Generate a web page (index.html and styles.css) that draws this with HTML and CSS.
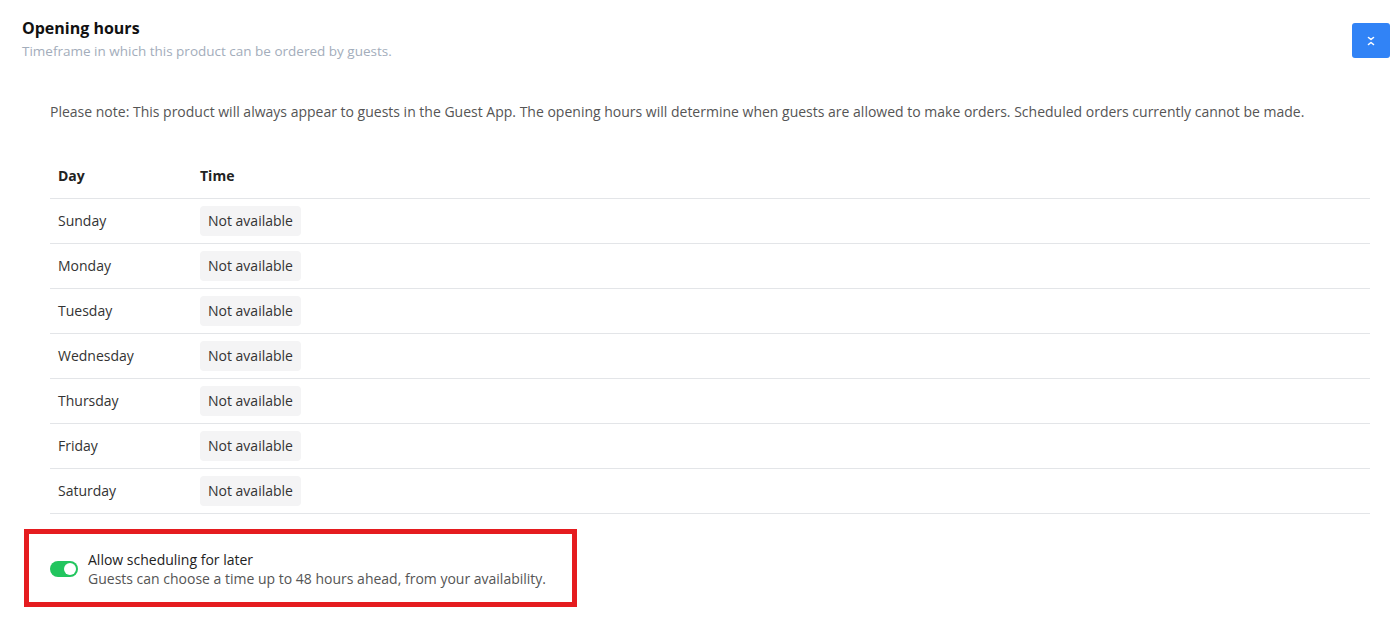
FILE: index.html
```html
<!DOCTYPE html>
<html>
<head>
<meta charset="utf-8">
<link rel="stylesheet" href="styles.css">
</head>
<body>
<div class="card">
  <div class="head">
    <div>
      <h2 class="title">Opening hours</h2>
      <p class="subtitle">Timeframe in which this product can be ordered by guests.</p>
    </div>
    <button class="collapse-btn" aria-label="Collapse">
      <svg width="12" height="12" viewBox="0 0 12 12"><path d="M3.5 2.5 L6 4.5 L8.5 2.5 M3.5 9.5 L6 7.5 L8.5 9.5" fill="none" stroke="#fff" stroke-width="1.6" stroke-linecap="round" stroke-linejoin="round"/></svg>
    </button>
  </div>
  <div class="content">
    <p class="note">Please note: This product will always appear to guests in the Guest App. The opening hours will determine when guests are allowed to make orders. Scheduled orders currently cannot be made.</p>
    <table class="hours">
      <thead>
        <tr><th class="col-day">Day</th><th>Time</th></tr>
      </thead>
      <tbody>
        <tr><td>Sunday</td><td><span class="pill">Not available</span></td></tr>
        <tr><td>Monday</td><td><span class="pill">Not available</span></td></tr>
        <tr><td>Tuesday</td><td><span class="pill">Not available</span></td></tr>
        <tr><td>Wednesday</td><td><span class="pill">Not available</span></td></tr>
        <tr><td>Thursday</td><td><span class="pill">Not available</span></td></tr>
        <tr><td>Friday</td><td><span class="pill">Not available</span></td></tr>
        <tr><td>Saturday</td><td><span class="pill">Not available</span></td></tr>
      </tbody>
    </table>
  </div>
  <div class="highlight">
    <span class="toggle"><span class="knob"></span></span>
    <div class="toggle-text">
      <div class="toggle-title">Allow scheduling for later</div>
      <div class="toggle-desc">Guests can choose a time up to 48 hours ahead, from your availability.</div>
    </div>
  </div>
</div>
</body>
</html>
```
FILE: styles.css
```css
* { box-sizing: border-box; }
body {
  margin: 0;
  font-family: "Open Sans", "Liberation Sans", sans-serif;
  color: #222;
  background: #fff;
}
.card {
  padding: 17px 6px 0 22px;
}
.head {
  display: flex;
  justify-content: space-between;
  align-items: flex-start;
}
.title {
  margin: 0;
  font-size: 16px;
  line-height: 22px;
  font-weight: 700;
  color: #111;
}
.subtitle {
  margin: 2px 0 0;
  font-size: 13.5px;
  line-height: 20px;
  color: #a3adbb;
}
.collapse-btn {
  margin-top: 6px;
  width: 38px;
  height: 35px;
  border: none;
  border-radius: 3px;
  background: #3183f6;
  display: flex;
  align-items: center;
  justify-content: center;
  padding: 0;
}
.content {
  margin-left: 28px;
  margin-right: 20px;
}
.note {
  margin: 41px 0 0;
  font-size: 14px;
  line-height: 20px;
  color: #555;
}
.hours {
  width: 100%;
  border-collapse: collapse;
  margin-top: 31px;
  font-size: 14px;
}
.hours th {
  text-align: left;
  font-weight: 700;
  color: #222;
  height: 45px;
  padding: 0 8px;
  border-bottom: 1px solid #e3e5e8;
}
.hours th.col-day { width: 150px; }
.hours td {
  height: 45px;
  padding: 0 8px;
  border-bottom: 1px solid #e3e5e8;
  color: #333;
}
.pill {
  display: inline-block;
  background: #f4f4f5;
  border-radius: 4px;
  padding: 5px 8px;
  line-height: 20px;
  color: #333;
}
.hours td:last-child { padding-left: 0; }
.hours th:last-child { padding-left: 0; }
.highlight {
  margin: 15px 0 0 2px;
  width: 553px;
  border: 5px solid #e51c1f;
  display: flex;
  align-items: center;
  gap: 10px;
  padding: 16px 20px 14px 21px;
}
.toggle {
  width: 28px;
  height: 16px;
  border-radius: 8px;
  background: #22c55e;
  position: relative;
  flex: none;
}
.knob {
  position: absolute;
  right: 2px;
  top: 2px;
  width: 12px;
  height: 12px;
  border-radius: 50%;
  background: #fff;
}
.toggle-title {
  font-size: 14px;
  line-height: 19px;
  color: #222;
}
.toggle-desc {
  font-size: 14px;
  line-height: 19px;
  color: #555;
}
```
